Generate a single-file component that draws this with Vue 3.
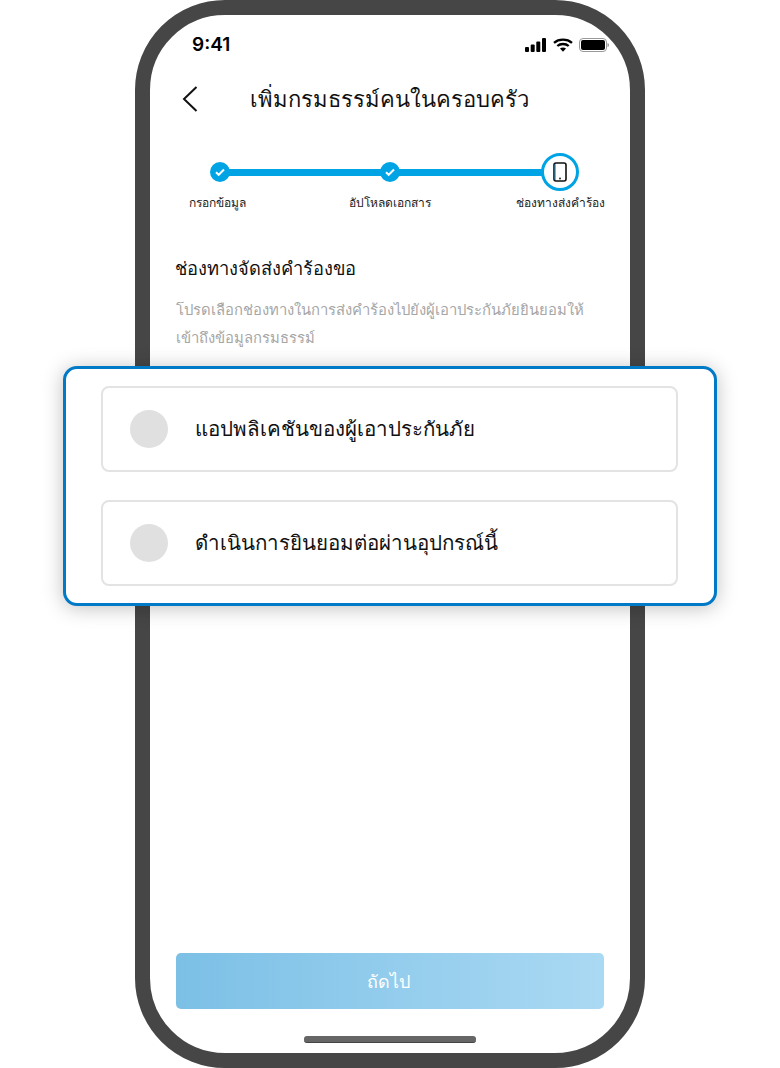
<template>
  <div class="page">
    <div class="phone">
      <div class="screen">
        <div class="status">
          <span class="time">9:41</span>
          <div class="status-icons">
            <svg class="signal" width="21" height="14" viewBox="0 0 21 14"><rect x="0" y="9" width="4" height="5" rx="1"/><rect x="5.700" y="6.500" width="4" height="7.500" rx="1"/><rect x="11.300" y="3.500" width="4" height="10.500" rx="1"/><rect x="17" y="0" width="4" height="14" rx="1"/></svg>
            <svg class="wifi" width="20" height="14" viewBox="0 0 20 14"><path d="M1 4.800C5.800.6 14.200.6 19 4.800" fill="none" stroke="#000" stroke-width="2.300"/><path d="M4.300 8C7.300 5.300 12.700 5.300 15.700 8" fill="none" stroke="#000" stroke-width="2.300"/><path d="M7 10.600 10 13.800 13 10.600C11.300 9 8.700 9 7 10.600Z"/></svg>
            <svg width="30" height="14" viewBox="0 0 30 14"><rect x=".5" y=".5" width="27" height="13" rx="3.500" fill="none" stroke="#999"/><rect x="2" y="2" width="24" height="10" rx="2"/><path d="M28.500 5v4c1 0 1.500-1 1.500-2s-.5-2-1.500-2Z" fill="#999"/></svg>
          </div>
        </div>
        <header class="nav">
          <svg class="back" width="16" height="26" viewBox="0 0 16 26"><path d="M14.500 1 2 13l12.500 12" fill="none" stroke="#111" stroke-width="2"/></svg>
          <h1>เพิ่มกรมธรรม์คนในครอบครัว</h1>
        </header>
        <div class="stepper">
          <div class="line"></div>
          <div class="step" v-for="(s, i) in steps" :key="s">
            <div class="node">
              <span v-if="i < 2" class="dot">
                <svg width="12" height="10" viewBox="0 0 12 10"><path d="M2 5.200 4.700 7.800 10 2.500" fill="none" stroke="#fff" stroke-width="2"/></svg>
              </span>
              <span v-else class="ring">
                <svg width="14" height="20" viewBox="0 0 14 20"><rect x="1" y="1" width="12" height="18" rx="2" fill="none" stroke="#111" stroke-width="1.600"/><path d="M2.200 2v16" stroke="#00a4e4" stroke-width="1"/><circle cx="7" cy="16.500" r=".9" fill="#111"/></svg>
              </span>
            </div>
            <span class="step-label">{{ s }}</span>
          </div>
        </div>
        <h2>ช่องทางจัดส่งคำร้องขอ</h2>
        <p class="desc">โปรดเลือกช่องทางในการส่งคำร้องไปยังผู้เอาประกันภัยยินยอมให้<br>เข้าถึงข้อมูลกรมธรรม์</p>
        <div class="spacer"></div>
        <button class="next">ถัดไป</button>
        <div class="home"></div>
      </div>
    </div>
    <div class="card">
      <div class="option" v-for="o in options" :key="o">
        <span class="radio"></span>
        <span class="option-text">{{ o }}</span>
      </div>
    </div>
  </div>
</template>

<script setup>
const steps = ['กรอกข้อมูล', 'อัปโหลดเอกสาร', 'ช่องทางส่งคำร้อง']
const options = ['แอปพลิเคชันของผู้เอาประกันภัย', 'ดำเนินการยินยอมต่อผ่านอุปกรณ์นี้']
</script>

<style>
html, body { margin: 0; background: #fff; }
</style>

<style scoped>
.page {
  position: relative;
  width: 780px;
  height: 1068px;
  overflow: hidden;
  background: #fff;
  display: flex;
  justify-content: center;
  font-family: "Noto Sans", "Inter", "DejaVu Sans", sans-serif;
  color: #111;
}
.phone {
  box-sizing: border-box;
  width: 510px;
  height: 1068px;
  border: 15px solid #464646;
  border-radius: 90px;
  background: #fff;
}
.screen {
  height: 100%;
  display: flex;
  flex-direction: column;
  padding: 0 26px;
}
.status {
  display: flex;
  justify-content: space-between;
  align-items: center;
  height: 30px;
  padding: 15px 0 0 16px;
}
.time { font: 600 19px/30px "Inter", sans-serif; color: #000; }
.status-icons { display: flex; align-items: center; margin-right: -5px; }
.signal { margin-right: 7px; }
.wifi { margin-right: 6px; margin-top: -1px; }
.nav {
  position: relative;
  display: flex;
  justify-content: center;
  align-items: center;
  height: 40px;
  margin-top: 18px;
}
.back { position: absolute; left: 6px; top: 8px; }
h1 { margin: 0; font-size: 22px; font-weight: 500; line-height: 40px; margin-left: -2px; }
.stepper {
  position: relative;
  display: flex;
  justify-content: space-between;
  margin-top: 35px;
  margin-left: 1px;
  margin-right: 1px;
}
.line {
  position: absolute;
  left: 43px;
  right: 43px;
  top: 16px;
  height: 7px;
  background: #00a4e4;
}
.step {
  position: relative;
  display: flex;
  flex-direction: column;
  align-items: center;
  width: 86px;
}
.step:nth-child(2) .step-label { margin-right: 5px; }
.node { height: 38px; display: flex; align-items: center; justify-content: center; }
.dot {
  width: 20px; height: 20px; border-radius: 50%;
  background: #00a4e4;
  display: flex; align-items: center; justify-content: center;
}
.ring {
  box-sizing: border-box;
  width: 38px; height: 38px; border-radius: 50%;
  border: 3px solid #00a4e4;
  background: #fff;
  display: flex; align-items: center; justify-content: center;
}
.step-label { font-size: 12px; line-height: 16px; margin-top: 4px; white-space: nowrap; color: #222; }
h2 { margin: 44px 0 0 -1px; font-size: 18.300px; font-weight: 500; line-height: 26px; }
.desc { margin: 15px 0 0; font-size: 14.800px; line-height: 27.500px; color: #a6a6a6; white-space: nowrap; }
.spacer { flex: 1; }
.next {
  height: 56px;
  border: none;
  border-radius: 5px;
  padding: 0 4px 0 0;
  background: linear-gradient(90deg, #7cc0e6, #aad9f3);
  color: #fff;
  font-size: 18px;
  font-weight: 500;
  font-family: inherit;
}
.home {
  width: 172px; height: 6px; border-radius: 3px;
  background: #666;
  border-bottom: 1px solid #444;
  box-sizing: content-box;
  margin: 27px auto 10px;
}
.card {
  position: absolute;
  left: 63px;
  top: 366px;
  box-sizing: border-box;
  width: 654px;
  height: 240px;
  border: 3px solid #0079c6;
  border-radius: 14px;
  background: #fff;
  box-shadow: 0 2px 20px rgba(0, 0, 0, .25);
  padding: 17px 36px 17px 35px;
  display: flex;
  flex-direction: column;
  gap: 28px;
}
.option {
  box-sizing: border-box;
  height: 86px;
  border: 2px solid #e3e3e3;
  border-radius: 8px;
  display: flex;
  align-items: center;
  padding-left: 27px;
  gap: 27px;
}
.radio { width: 38px; height: 38px; border-radius: 50%; background: #e0e0e0; }
.option-text { font-size: 20.500px; line-height: 30px; margin-bottom: 3px; }
</style>
